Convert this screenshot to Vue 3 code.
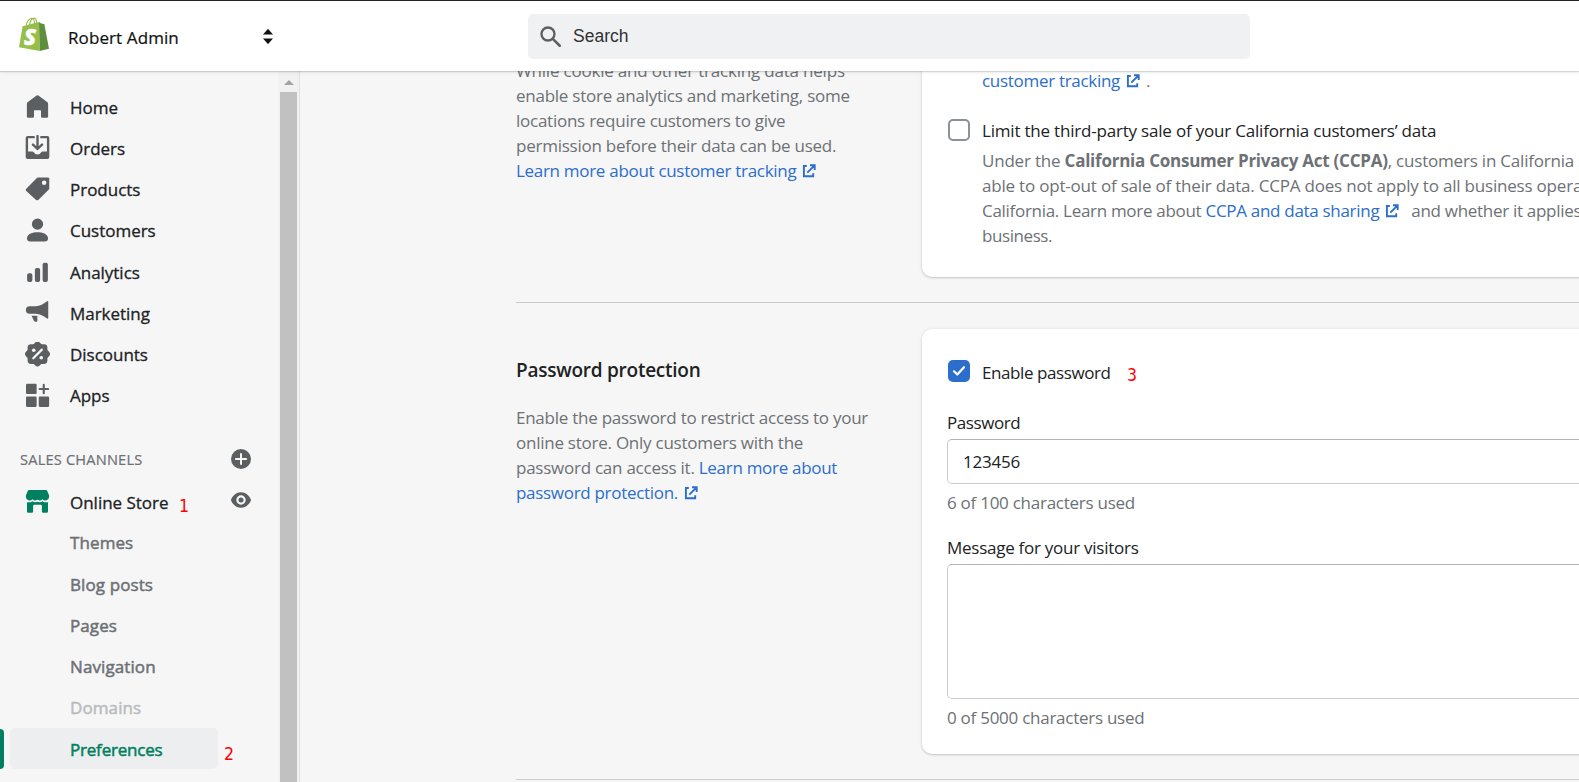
<script setup>
const nav = [
  { label: 'Home', icon: 'home' },
  { label: 'Orders', icon: 'orders' },
  { label: 'Products', icon: 'products' },
  { label: 'Customers', icon: 'customers' },
  { label: 'Analytics', icon: 'analytics' },
  { label: 'Marketing', icon: 'marketing' },
  { label: 'Discounts', icon: 'discounts' },
  { label: 'Apps', icon: 'apps' },
]
const channel = [
  { label: 'Themes' },
  { label: 'Blog posts' },
  { label: 'Pages' },
  { label: 'Navigation' },
  { label: 'Domains', state: 'disabled' },
  { label: 'Preferences', state: 'selected' },
]
</script>

<template>
  <div class="page">
    <header class="topbar">
      <div class="brand">
        <svg class="logo" viewBox="0 0 30 34">
          <path d="M7.2 8.5C7.8 4.5 10.200 1.300 12.600 1.200c2 0 3 2.600 3 6M10.400 8C11.400 3.500 13.400 1 15.300 1.100c1.700.2 2.300 2.500 2.400 5.400" fill="none" stroke="#95bf47" stroke-width="1.100" />
          <path d="M3.600 9.300 20 4.900 20.700 34 0 30.200z" fill="#95bf47" />
          <path d="M20 4.900 22.200 6.600 25.300 7 30 31.800 20.700 34z" fill="#5e8e3e" />
          <text x="4.900" y="27.600" class="logo-letter">S</text>
        </svg>
        <span class="store-name">Robert Admin</span>
        <svg class="sort" viewBox="0 0 10 15"><path d="M0 5.500h10L5.600.4a.8.8 0 0 0-1.200 0zM0 9.500h10l-4.400 5.100a.8.8 0 0 1-1.200 0z" fill="#111" /></svg>
      </div>
      <div class="search">
        <svg class="search-icon" viewBox="0 0 20 20"><circle cx="7.600" cy="7.600" r="6.200" fill="none" stroke="#5c5f62" stroke-width="2.200" /><path d="m12.200 12.200 6.600 6.600" stroke="#5c5f62" stroke-width="2.400" stroke-linecap="round" /></svg>
        <span>Search</span>
      </div>
    </header>

    <div class="body">
      <aside class="sidebar">
        <nav class="nav">
          <div v-for="item in nav" :key="item.label" class="nav-item">
            <svg class="icon" viewBox="0 0 20 20">
              <path v-if="item.icon === 'home'" d="M9.300 1.200a1.100 1.100 0 0 1 1.400 0l7 5.200c.5.400.800.900.800 1.500V18a1 1 0 0 1-1 1h-3.700a1 1 0 0 1-1-1v-4.500a.5.500 0 0 0-.5-.5H7.700a.5.500 0 0 0-.5.500V18a1 1 0 0 1-1 1H2.500a1 1 0 0 1-1-1V7.900c0-.6.300-1.100.8-1.500z" />
              <g v-else-if="item.icon === 'orders'">
                <path d="M7 1.700H2.200a.7.700 0 0 0-.7.700v15.200c0 .4.300.7.700.7h15.600c.4 0 .7-.3.700-.7V2.400a.7.700 0 0 0-.7-.7H13M10 .8v10M6.400 7.700 10 11.200l3.600-3.500" fill="none" stroke="currentColor" stroke-width="1.900" stroke-linecap="round" stroke-linejoin="round" />
                <path d="M1.500 13.200h4.200c.7 0 1.100.3 1.500.8.600 1 1.600 1.600 2.800 1.600s2.200-.6 2.800-1.600c.4-.5.800-.8 1.500-.8h4.200v5.300h-17z" />
              </g>
              <path v-else-if="item.icon === 'products'" fill-rule="evenodd" d="M10.600.3H18.300c.6 0 1.100.5 1.100 1.100v7.700c0 .4-.2.800-.5 1.100l-8.300 8.100c-.5.500-1.200.5-1.700 0L1 11.100c-.5-.5-.5-1.200 0-1.700L9.500.7c.3-.3.700-.4 1.100-.4zM15.300 6.400a1.800 1.800 0 1 0 0-3.600 1.800 1.800 0 0 0 0 3.600z" />
              <path v-else-if="item.icon === 'customers'" d="M14.500 4.900a4.500 4.500 0 1 1-9 0 4.500 4.500 0 0 1 9 0zM1.600 15.700c.6-3.300 4.300-4.400 8.400-4.400s7.800 1.100 8.400 4.400c.3 1.700-.800 3-2.500 3H4.100c-1.700 0-2.800-1.300-2.500-3z" />
              <g v-else-if="item.icon === 'analytics'"><rect x="1.700" y="11.300" width="4.200" height="7" rx="1.500" /><rect x="7.900" y="7.100" width="4.200" height="11.200" rx="1.500" /><rect x="14.100" y="2.900" width="4.200" height="15.400" rx="1.500" /></g>
              <path v-else-if="item.icon === 'marketing'" d="M18.600 1.300v13.100c0 .5-.5.700-.9.400-2.700-2.100-5.800-3.800-9.200-3.900H3.700a3 3 0 0 1 0-6h4.800c3.400-.2 6.500-1.900 9.200-4 .4-.3.900-.1.900.4zM5.200 12.500h4.700v4c0 .5-.3.900-.8.900h-.7c-.5 0-.9-.2-1.200-.6z" />
              <g v-else-if="item.icon === 'discounts'">
                <rect x="2.100" y="1.700" width="15.800" height="15.800" rx="2.700" />
                <rect x="2.200" y="1.800" width="15.600" height="15.600" rx="2.800" transform="rotate(45 10 9.600)" />
                <path d="m6.600 13 6.900-6.900" stroke="#f6f6f7" stroke-width="1.700" stroke-linecap="round" /><circle cx="7" cy="6.600" r="1.450" fill="#f6f6f7" /><circle cx="13" cy="12.600" r="1.450" fill="#f6f6f7" />
              </g>
              <g v-else><rect x=".8" y=".6" width="8.500" height="8.200" rx=".9" /><rect x=".8" y="10.800" width="8.500" height="8.300" rx=".9" /><rect x="11" y="10.800" width="8.300" height="8.300" rx=".9" /><path d="M15 1.500v6.600M11.700 4.800h6.800" stroke="currentColor" stroke-width="1.700" stroke-linecap="round" /></g>
            </svg>
            <span class="nav-label">{{ item.label }}</span>
          </div>

          <div class="channel-head">
            <span>SALES CHANNELS</span>
            <svg class="small-icon" viewBox="0 0 20 20"><circle cx="10" cy="10" r="10" fill="#5c5f62" /><path d="M10 4.900v10.200M4.900 10h10.200" stroke="#f6f6f7" stroke-width="2" stroke-linecap="round" /></svg>
          </div>

          <div class="nav-item store">
            <svg class="icon green" viewBox="0 0 20 20">
              <path d="M3.300.8h13.400c.5 0 .9.300 1.100.7l1.500 3.700v1a3 3 0 0 1-5.300 1.900 2.900 2.900 0 0 1-4 .3 2.900 2.900 0 0 1-4-.3A3 3 0 0 1 .7 6.200v-1l1.500-3.700c.2-.4.600-.7 1.100-.7z" />
              <path d="M1.600 10.500c1.700.4 3.100.1 4.400-.8 1.200.9 2.700 1.100 4 .5 1.300.6 2.800.4 4-.5 1.300.9 2.700 1.200 4.400.8V18a1 1 0 0 1-1 1h-2.900a1 1 0 0 1-1-1v-4.500a.9.900 0 0 0-.9-.9H7.400a.9.900 0 0 0-.9.900V18a1 1 0 0 1-1 1H2.600a1 1 0 0 1-1-1z" />
            </svg>
            <span class="nav-label">Online Store</span>
            <b class="mark mark-1">1</b>
            <svg class="eye" viewBox="0 0 20 16"><path fill-rule="evenodd" d="M19.900 7.600C19.800 7.300 17 .3 10 .3S.2 7.300.1 7.600a1 1 0 0 0 0 .8c.1.300 2.900 7.300 9.900 7.300s9.800-7 9.900-7.300a1 1 0 0 0 0-.8zM10 12.700a4.700 4.700 0 1 1 0-9.400 4.700 4.700 0 0 1 0 9.400z" /><circle cx="10" cy="8" r="2.500" /></svg>
          </div>
          <div v-for="item in channel" :key="item.label" class="nav-item sub" :class="item.state">
            <span class="nav-label">{{ item.label }}</span>
            <b v-if="item.state === 'selected'" class="mark mark-2">2</b>
          </div>
        </nav>
        <div class="scrollbar">
          <div class="arrow"></div>
          <div class="thumb"></div>
        </div>
      </aside>

      <main class="main">
        <section class="row first">
          <div class="annotation">
            <p class="copy">
              <span class="line wide">While cookie and other tracking data helps</span>
              <span class="line">enable store analytics and marketing, some</span>
              <span class="line">locations require customers to give</span>
              <span class="line">permission before their data can be used.</span>
              <span class="line link tight">Learn more about customer tracking<svg class="ext" viewBox="0 0 14 14"><path d="M4.800 2H1.900v10.200h9.300V9.200M5.300 8.700l6.500-6.500M8 1.300h4.700V6" /></svg></span>
            </p>
          </div>
          <div class="card card-a">
            <p class="copy indent"><span class="line tight"><span class="link">customer tracking<svg class="ext" viewBox="0 0 14 14"><path d="M4.800 2H1.900v10.200h9.300V9.200M5.300 8.700l6.500-6.500M8 1.300h4.700V6" /></svg></span><span class="dot">.</span></span></p>
            <div class="choice">
              <span class="box"></span>
              <span class="label wide">Limit the third-party sale of your California customers’ data</span>
            </div>
            <p class="copy indent help">
              <span class="line wide">Under the <strong>California Consumer Privacy Act (CCPA)</strong>, customers in California should be</span>
              <span class="line wide">able to opt-out of sale of their data. CCPA does not apply to all business operating in</span>
              <span class="line tight">California. Learn more about <span class="link">CCPA and data sharing<svg class="ext" viewBox="0 0 14 14"><path d="M4.800 2H1.900v10.200h9.300V9.200M5.300 8.700l6.500-6.500M8 1.300h4.700V6" /></svg></span><span class="after">and whether it applies to your</span></span>
              <span class="line tighter">business.</span>
            </p>
          </div>
        </section>

        <section class="row second">
          <div class="annotation">
            <h2>Password protection</h2>
            <p class="copy">
              <span class="line">Enable the password to restrict access to your</span>
              <span class="line">online store. Only customers with the</span>
              <span class="line">password can access it. <span class="link tight">Learn more about</span></span>
              <span class="line link tight">password protection.<svg class="ext" viewBox="0 0 14 14"><path d="M4.800 2H1.900v10.200h9.300V9.200M5.300 8.700l6.500-6.500M8 1.300h4.700V6" /></svg></span>
            </p>
          </div>
          <div class="card card-b">
            <div class="choice">
              <span class="box checked"><svg viewBox="0 0 22 22"><path d="m6 11.300 3.300 3.200 6.700-7.300" fill="none" stroke="#fff" stroke-width="2.200" stroke-linecap="round" stroke-linejoin="round" /></svg></span>
              <span class="label tighter">Enable password<b class="mark mark-3">3</b></span>
            </div>
            <div class="label field-label tighter">Password</div>
            <div class="field">123456</div>
            <div class="label count">6 of 100 characters used</div>
            <div class="label field-label message">Message for your visitors</div>
            <div class="field area"></div>
            <div class="label count">0 of 5000 characters used</div>
          </div>
        </section>
        <div class="row third"></div>
      </main>
    </div>
  </div>
</template>

<style>
body { margin: 0; overflow: hidden; }
</style>

<style scoped>
.page {
  width: 100%;
  height: 782px;
  box-sizing: border-box;
  overflow: hidden;
  background: #f6f6f7;
  color: #202223;
  font-family: "Open Sans", "Noto Sans", sans-serif;
  font-size: 17px;
  line-height: 25px;
  white-space: nowrap;
  display: flex;
  flex-direction: column;
}
.topbar {
  position: relative;
  z-index: 2;
  flex: none;
  height: 71px;
  box-sizing: border-box;
  border-top: 1px solid #242424;
  background: #fff;
  box-shadow: 0 1px 1px rgba(0, 0, 0, .12), 0 2px 3px rgba(0, 0, 0, .06);
  display: flex;
}
.brand { width: 528px; height: 70px; display: flex; }
.logo { width: 30px; height: 34px; margin: 16px 0 0 19px; }
.logo-letter { font: italic 900 22px "Open Sans", sans-serif; fill: #fff; stroke: #fff; stroke-width: .5px; }
.store-name { margin: 24px 0 0 19px; width: 195px; letter-spacing: .1px; color: #111; -webkit-text-stroke: .2px #111; }
.sort { width: 10px; height: 15px; margin-top: 28px; }
.search {
  width: 722px;
  height: 45px;
  margin-top: 13px;
  border-radius: 5px;
  background: #f0f1f3;
  display: flex;
  align-items: center;
  font-family: "Liberation Sans", Arial, sans-serif;
  font-size: 17.5px;
  color: #303234;
}
.search-icon { width: 21px; height: 21px; margin: 0 12px 0 12px; }

.body { flex: 1; min-height: 0; display: flex; }
.sidebar { width: 300px; flex: none; box-sizing: border-box; border-right: 1px solid #e1e1e1; display: flex; }
.nav { width: 278px; padding-top: 15px; flex: none; }
.nav-item { position: relative; height: 41.25px; display: flex; align-items: center; }
.nav-label { padding-top: 1px; -webkit-text-stroke: .3px currentColor; letter-spacing: -.02px; }
.store .nav-label { padding-top: 2px; }
.icon { width: 25px; height: 25px; margin: 0 20px 0 25px; fill: #5c5f62; color: #5c5f62; }
.icon.green { fill: #008060; }
.channel-head { height: 64.500px; display: flex; align-items: center; padding: 22px 27px 0 20px; box-sizing: border-box; justify-content: space-between; font-size: 14.600px; letter-spacing: .2px; color: #6d7175; -webkit-text-stroke: .2px #6d7175; }
.small-icon { width: 20px; height: 20px; }
.eye { width: 20px; height: 16px; fill: #5c5f62; margin: -3px 27px 0 auto; }
.sub { color: #6d7175; margin-left: 10px; width: 208px; padding-left: 60px; box-sizing: border-box; border-radius: 5px; }
.sub .nav-label { -webkit-text-stroke: .5px currentColor; letter-spacing: .1px; }
.sub.disabled { color: #b9bcbf; }
.sub.selected { background: #edeeef; color: #008060; }
.sub.selected .nav-label { letter-spacing: -.2px; }
.selected::before { content: ""; position: absolute; left: -10px; top: 1px; width: 4px; height: 40px; border-radius: 0 4px 4px 0; background: #008060; }
.mark { position: absolute; color: #f00; font: 400 17.5px/20px "DejaVu Sans Condensed", "DejaVu Sans", sans-serif; letter-spacing: 0; }
.mark-1 { left: 179px; top: 15px; }
.mark-2 { left: 214px; top: 16px; }
.mark-3 { left: 145px; top: 5px; }

.scrollbar { width: 21px; background: #f1f1f1; display: flex; flex-direction: column; align-items: center; }
.arrow { margin: 9px 0 7px; border: 5px solid transparent; border-top: 0; border-bottom-color: #a3a3a3; }
.thumb { flex: 1; width: 17px; background: #c1c1c1; }

.main { flex: 1; min-width: 0; padding-left: 216px; overflow: hidden; }
.row { display: grid; grid-template-columns: 406px 760px; }
.first { margin-top: -13px; height: 244px; }
.second { border-top: 1px solid #c9cccf; height: 477px; box-sizing: border-box; padding-top: 26px; }
.third { border-top: 1px solid #c9cccf; height: 10px; }
.copy { margin: 0; color: #6d7175; letter-spacing: -.25px; }
.line { display: block; height: 25px; }
.link { color: #2c6ecb; }
.ext { width: 14px; height: 14px; margin-left: 6px; vertical-align: -1px; fill: none; stroke: #2c6ecb; stroke-width: 1.900; }
.card { background: #fff; border-radius: 10px; box-shadow: 0 0 4px rgba(23, 24, 24, .07), 0 1px 2px rgba(0, 0, 0, .17); box-sizing: border-box; padding-left: 25px; }
.card-a { height: 219px; padding-top: 10px; }
.card-b { height: 425px; padding-top: 28px; }
.indent { padding-left: 35px; }
.dot { margin-left: 6px; }
.after { margin-left: 12px; }
.choice { display: flex; margin-top: 25px; }
.card-b .choice { margin-top: 3px; }
.box { width: 22px; height: 22px; box-sizing: border-box; border: 2px solid #8c9196; border-radius: 5px; margin: 1px 12px 0 1px; }
.checked { border: 0; background: #2c6ecb; margin-top: 0; }
.checked svg { display: block; width: 22px; height: 22px; }
.label { position: relative; letter-spacing: -.26px; }
.tight { letter-spacing: -.3px; }
.tighter { letter-spacing: -.42px; }
.wide { letter-spacing: -.2px; }
.help { margin-top: 5px; }
.help strong { letter-spacing: -.25px; }
h2 { margin: 29px 0 22px; font-size: 19px; font-weight: 600; line-height: 25px; letter-spacing: -.25px; }
.field-label { margin-top: 25px; }
.field { height: 45px; box-sizing: border-box; margin: 4px 0 6px; padding: 9px 15px; border: 1px solid #c9cccf; border-top-color: #aeb4b9; border-radius: 5px; letter-spacing: -.2px; }
.area { height: 135px; }
.count { color: #6d7175; }
.message { margin-top: 20px; }
</style>
